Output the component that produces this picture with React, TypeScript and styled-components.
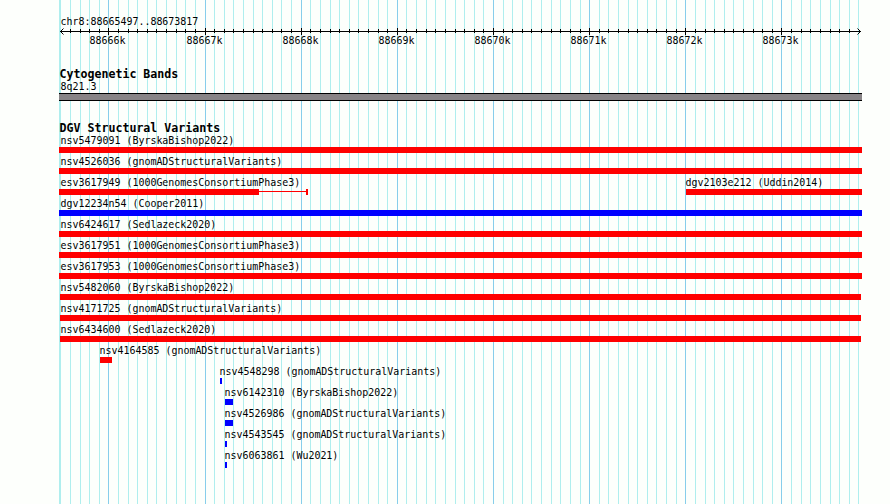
import React from 'react';
import styled, { createGlobalStyle } from 'styled-components';

const START = 88665497;
const END = 88673817;
const LEFT = 59;
const WIDTH = 803;

const toX = (pos: number) => Math.round(60 + ((pos - START) * 800) / (END - START));

const GlobalStyle = createGlobalStyle`
  body {
    margin: 0;
    background: #fdfffc;
  }
`;

const Browser = styled.main`
  position: relative;
  box-sizing: border-box;
  width: 890px;
  height: 504px;
  padding: 15px 28px 0 ${LEFT}px;
  overflow: hidden;
  background: #fdfffc;
  color: #000;
  font-family: 'DejaVu Sans Mono', monospace;
  font-size: 9.967px;
  line-height: 13px;
  white-space: nowrap;
`;

const Gridlines = styled.svg`
  position: absolute;
  inset: 0;
`;

const Content = styled.div`
  position: relative;
`;

const Region = styled.div`
  height: 13px;
  padding-left: 1.5px;
`;

const Axis = styled.svg`
  display: block;
  width: ${WIDTH}px;
  height: 7px;
`;

const Scale = styled.div`
  display: flex;
  height: 13px;
  margin-top: -1px;
  padding-left: 30.5px;
`;

const ScaleLabel = styled.span`
  flex: none;
  width: 96px;

  &:first-child {
    width: 97px;
  }
`;

const Track = styled.section<{ $gap: number }>`
  margin-top: ${(p) => p.$gap}px;
`;

const Title = styled.h2`
  height: 12px;
  margin: 0;
  padding-left: 0.5px;
  font-size: 11.627px;
  font-weight: bold;
  line-height: 13px;
`;

const BandName = styled.div`
  height: 13px;
  padding-left: 1.5px;
`;

const Band = styled.div`
  box-sizing: border-box;
  width: ${WIDTH}px;
  height: 8px;
  border: solid #000;
  border-width: 1px 0;
  background: #888486;
`;

const Row = styled.div`
  display: flex;
  height: 21px;
`;

const Feature = styled.div<{ $gap: number; $width: number }>`
  flex: none;
  width: ${(p) => p.$width}px;
  margin-left: ${(p) => p.$gap}px;
`;

const Label = styled.div<{ $shift: number }>`
  height: 13px;
  text-indent: ${(p) => p.$shift}px;
`;

const Glyph = styled.div`
  display: flex;
  align-items: flex-start;
  height: 6px;
`;

const Bar = styled.div<{ $width: number; $color: string }>`
  width: ${(p) => p.$width}px;
  height: 6px;
  background: ${(p) => p.$color};
`;

const Connector = styled.div<{ $width: number }>`
  width: ${(p) => p.$width}px;
  height: 1px;
  margin-top: 2px;
  background: #f00;
`;

type Variant = {
  name: string;
  from: number;
  to: number;
  color?: string;
  // inner block end and start of the closing block, joined by a thin line
  split?: [number, number];
};

const rows: Variant[][] = [
  [{ name: 'nsv5479091 (ByrskaBishop2022)', from: 59, to: 862 }],
  [{ name: 'nsv4526036 (gnomADStructuralVariants)', from: 59, to: 862 }],
  [
    { name: 'esv3617949 (1000GenomesConsortiumPhase3)', from: 59, to: 308, split: [259, 306] },
    { name: 'dgv2103e212 (Uddin2014)', from: 686, to: 862 },
  ],
  [{ name: 'dgv12234n54 (Cooper2011)', from: 59, to: 862, color: '#00f' }],
  [{ name: 'nsv6424617 (Sedlazeck2020)', from: 59, to: 862 }],
  [{ name: 'esv3617951 (1000GenomesConsortiumPhase3)', from: 59, to: 862 }],
  [{ name: 'esv3617953 (1000GenomesConsortiumPhase3)', from: 59, to: 862 }],
  [{ name: 'nsv5482060 (ByrskaBishop2022)', from: 60, to: 861 }],
  [{ name: 'nsv4171725 (gnomADStructuralVariants)', from: 60, to: 861 }],
  [{ name: 'nsv6434600 (Sedlazeck2020)', from: 60, to: 861 }],
  [{ name: 'nsv4164585 (gnomADStructuralVariants)', from: 100, to: 112 }],
  [{ name: 'nsv4548298 (gnomADStructuralVariants)', from: 220, to: 222, color: '#00f' }],
  [{ name: 'nsv6142310 (ByrskaBishop2022)', from: 225, to: 233, color: '#00f' }],
  [{ name: 'nsv4526986 (gnomADStructuralVariants)', from: 225, to: 233, color: '#00f' }],
  [{ name: 'nsv4543545 (gnomADStructuralVariants)', from: 225, to: 227, color: '#00f' }],
  [{ name: 'nsv6063861 (Wu2021)', from: 225, to: 227, color: '#00f' }],
];

const ticks: { x: number; major: boolean }[] = [];
for (let pos = 88665500; pos <= END; pos += 100) {
  ticks.push({ x: toX(pos), major: pos % 1000 === 0 });
}

const kilobases = [88666, 88667, 88668, 88669, 88670, 88671, 88672, 88673];

function VariantRow({ variants }: { variants: Variant[] }) {
  return (
    <Row>
      {variants.map((v, i) => {
        const prev = i === 0 ? LEFT : variants[i - 1].to;
        const color = v.color || '#f00';
        const shift = v.from === 59 ? 1.5 : v.from === 60 ? 0.5 : -0.5;
        return (
          <Feature key={v.name} $gap={v.from - prev} $width={v.to - v.from}>
            <Label $shift={shift}>{v.name}</Label>
            {v.split ? (
              <Glyph>
                <Bar $width={v.split[0] - v.from} $color={color} />
                <Connector $width={v.split[1] - v.split[0]} />
                <Bar $width={v.to - v.split[1]} $color={color} />
              </Glyph>
            ) : (
              <Bar $width={v.to - v.from} $color={color} />
            )}
          </Feature>
        );
      })}
    </Row>
  );
}

export default function App() {
  return (
    <>
      <GlobalStyle />
      <Browser>
        <Gridlines width='890' height='504' shapeRendering='crispEdges'>
          <rect x={LEFT} y='0' width='1' height='504' fill='#afeeee' />
          {ticks.map((t) => (
            <rect key={t.x} x={t.x} y='0' width='1' height='504' fill={t.major ? '#87ceeb' : '#afeeee'} />
          ))}
        </Gridlines>
        <Content>
          <Region>chr8:88665497..88673817</Region>
          <Axis viewBox='59 28 803 7'>
            <g shapeRendering='crispEdges'>
              <rect x='60' y='31' width='801' height='1' />
              {ticks.slice(1, -1).map((t) => (
                <rect key={t.x} x={t.x} y={t.major ? 28 : 29} width='1' height={t.major ? 7 : 4} />
              ))}
            </g>
            <path d='M63.5 28.5 L60.5 31.5 L63.5 34.5 M857.5 28.5 L860.5 31.5 L857.5 34.5' fill='none' stroke='#000' />
          </Axis>
          <Scale>
            {kilobases.map((k) => (
              <ScaleLabel key={k}>{k}k</ScaleLabel>
            ))}
          </Scale>
          <Track $gap={21}>
            <Title>Cytogenetic Bands</Title>
            <BandName>8q21.3</BandName>
            <Band />
          </Track>
          <Track $gap={21}>
            <Title>DGV Structural Variants</Title>
            {rows.map((variants) => (
              <VariantRow key={variants[0].name} variants={variants} />
            ))}
          </Track>
        </Content>
      </Browser>
    </>
  );
}
